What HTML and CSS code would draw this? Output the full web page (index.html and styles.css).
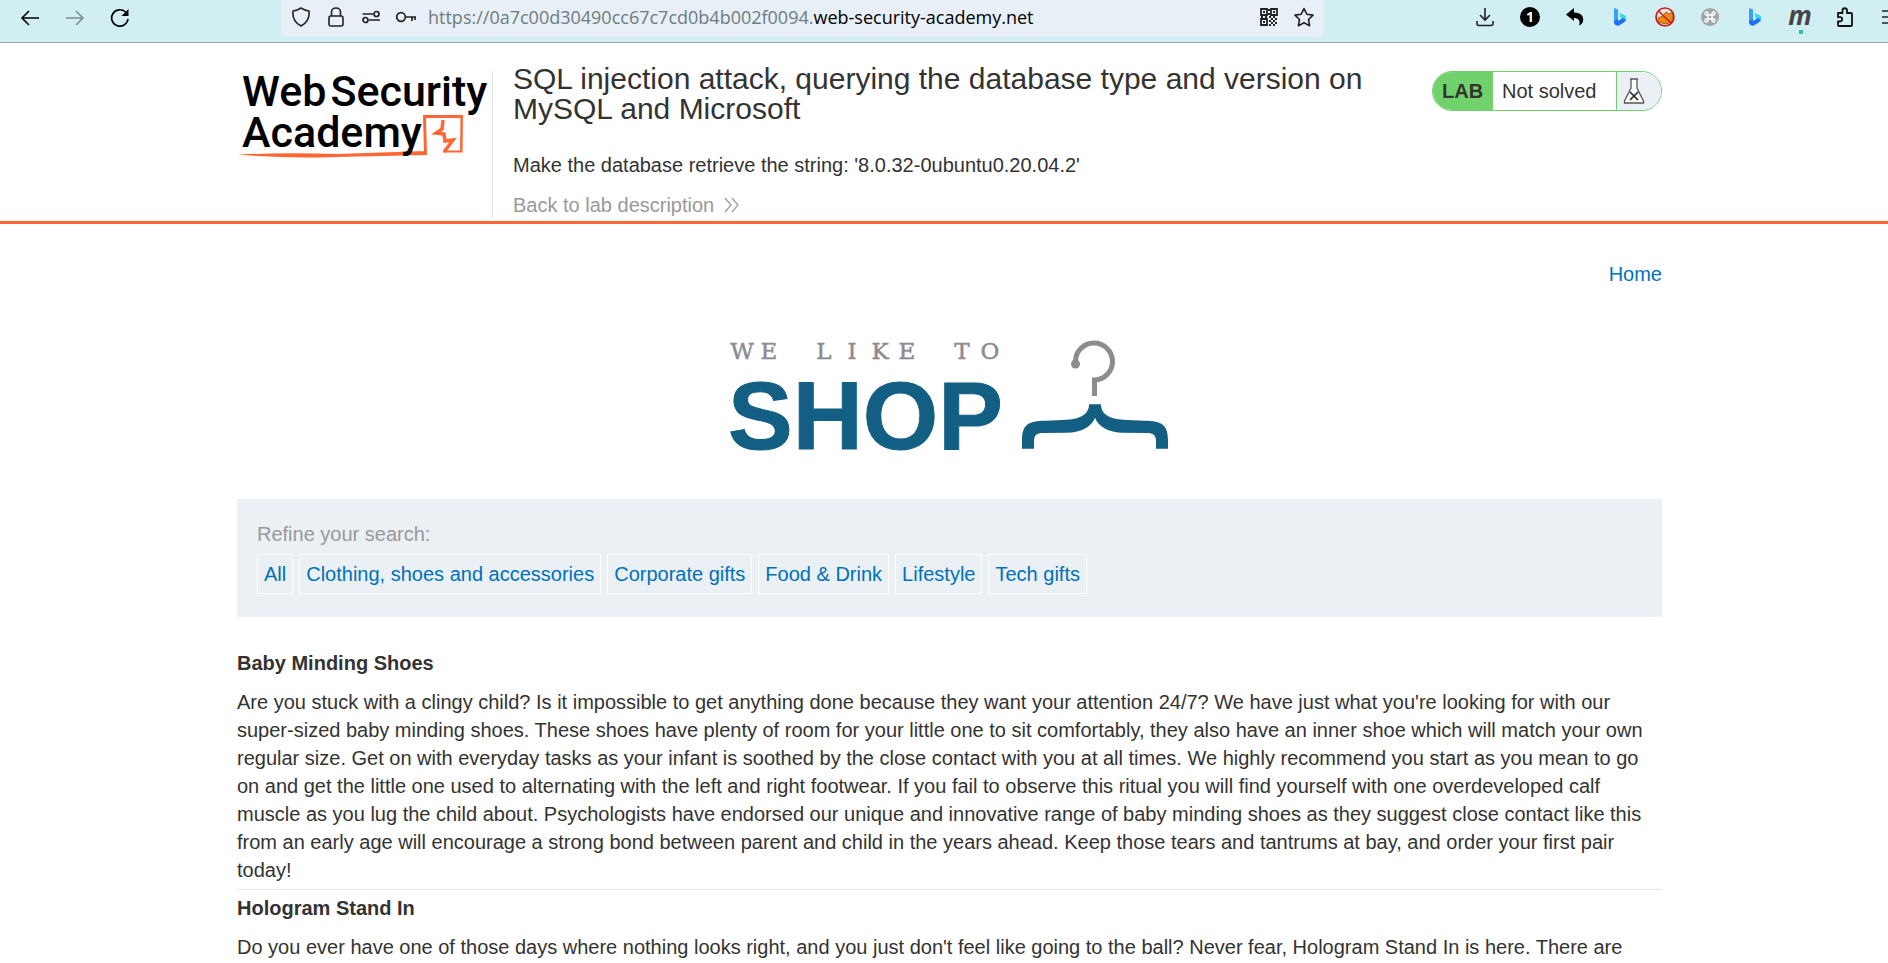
FILE: index.html
```html
<!DOCTYPE html>
<html lang="en">
<head>
<meta charset="utf-8">
<title>SQL injection attack, querying the database type and version on MySQL and Microsoft</title>
<link rel="stylesheet" href="styles.css">
</head>
<body>
<div class="toolbar">
  <div class="nav-buttons">
    <button class="icon-button" aria-label="Back"><svg width="20" height="20" viewBox="0 0 20 20"><path d="M19 10H2M9 3L2 10l7 7" fill="none" stroke="#000" stroke-width="1.6"/></svg></button>
    <button class="icon-button faded" aria-label="Forward"><svg width="20" height="20" viewBox="0 0 20 20"><path d="M1 10h17M11 3l7 7-7 7" fill="none" stroke="#000" stroke-width="1.6"/></svg></button>
    <button class="icon-button" aria-label="Reload"><svg width="20" height="20" viewBox="0 0 20 20"><path d="M15.500 4A8.200 8.200 0 1 0 18 11" fill="none" stroke="#000" stroke-width="1.7"/><path d="M18.500 1v7h-7z"/></svg></button>
  </div>
  <div class="address-bar">
    <div class="address-icons">
      <button class="icon-button" aria-label="Tracking protection"><svg width="20" height="20" viewBox="0 0 20 20"><path d="M10 1Q14 3.500 18 4c.8 7-2 12-8 15-6-3-8.800-8-8-15Q6 3.500 10 1z" fill="none" stroke="#222" stroke-width="1.600" stroke-linejoin="round"/></svg></button>
      <button class="icon-button" aria-label="Connection secure"><svg width="20" height="20" viewBox="0 0 20 20"><rect x="3" y="9" width="14" height="10" rx="2" fill="none" stroke="#222" stroke-width="1.600"/><path d="M5.500 9V5a4.500 4 0 0 1 9 0v4" fill="none" stroke="#222" stroke-width="1.600"/></svg></button>
      <button class="icon-button" aria-label="Permissions"><svg width="20" height="20" viewBox="0 0 20 20"><g fill="none" stroke="#222" stroke-width="1.700"><path d="M1.500 7H12M8 13h11"/><circle cx="15.500" cy="7" r="2.500"/><circle cx="4.500" cy="13" r="2.500"/></g></svg></button>
      <button class="icon-button" aria-label="Saved login"><svg width="22" height="20" viewBox="0 0 22 20"><g fill="none" stroke="#222" stroke-width="1.700"><circle cx="6" cy="10" r="4.300"/><path d="M10.300 10H21M17 10v4M20 10v3"/></g></svg></button>
    </div>
    <div class="url"><span class="url-host">https://0a7c00d30490cc67c7cd0b4b002f0094.</span>web-security-academy.net</div>
    <div class="address-actions">
      <button class="icon-button" aria-label="QR code"><svg width="20" height="20" viewBox="0 0 20 20"><g fill="none" stroke="#222" stroke-width="1.800"><path d="M2 2h6v6H2zM12 2h6v6h-6zM2 12h6v6H2z"/><path d="M4 5h2M14 5h2M4 15h2M9 3h2M9 7h2M2 10h2M6 10h2M10 10h2M14 10h2M12 12h2M16 12h2M10 14h2M14 14h2M12 16h2M16 16h2M10 18h2M14 18h2"/></g></svg></button>
      <button class="icon-button" aria-label="Bookmark"><svg width="22" height="20" viewBox="0 0 22 20"><path d="M11 1.500l2.800 5.700 6.200.9-4.500 4.400 1.100 6.200L11 15.700l-5.600 3 1.100-6.200L2 8.100l6.200-.9z" fill="none" stroke="#222" stroke-width="1.600" stroke-linejoin="round"/></svg></button>
    </div>
  </div>
  <div class="extensions">
    <button class="icon-button" aria-label="Downloads"><svg width="20" height="20" viewBox="0 0 20 20"><path d="M10 1v12M5 8l5 5 5-5M2 14v2.500q0 2 2 2h12q2 0 2-2V14" fill="none" stroke="#222" stroke-width="1.600"/></svg></button>
    <button class="icon-button" aria-label="One item"><span class="counter">1</span></button>
    <button class="icon-button" aria-label="Undo"><svg width="20" height="20" viewBox="0 0 20 20"><path d="M1 7.500L9 1v4.500c7 0 10 4 9 8.500-.5 2-1.500 3.500-4 4.500 2-5-1-7.500-5-7.500V14z"/></svg></button>
    <button class="icon-button" aria-label="Bing"><svg width="20" height="20" viewBox="0 0 20 20"><path d="M4 1l4 1.500V13l-4 3z" fill="#38a0fb"/><path d="M9.500 6l5 2q3 2 1 6l-5-3z" fill="#35d9ee"/><path d="M4 14l4-2v2l5-3 3 2q-1 2-7 5.500-4 1-5-2.500z" fill="#1f6ff5"/></svg></button>
    <button class="icon-button" aria-label="Blocked"><svg width="22" height="20" viewBox="0 0 22 20"><circle cx="11" cy="10" r="9" fill="#efe5dd"/><path d="M4 11l5-2 3-4 3 2 4-2-1 10-6 2-8-2z" fill="#ee8a13" stroke="#95661c"/><circle cx="11" cy="10" r="9" fill="none" stroke="#d01e20" stroke-width="1.700"/><path d="M4.500 4l13 12.500" stroke="#d01e20" stroke-width="1.700"/></svg></button>
    <button class="icon-button" aria-label="Shortcuts"><svg width="20" height="20" viewBox="0 0 20 20"><circle cx="10" cy="10" r="9" fill="#a3a5a5"/><path d="M8 8h4v4H8zM8 8H6.500A1.500 1.500 0 1 1 8 6.500zM12 8V6.500A1.500 1.500 0 1 1 13.500 8zM12 12h1.500a1.500 1.500 0 1 1-1.500 1.500zM8 12v1.500A1.500 1.500 0 1 1 6.500 12z" fill="none" stroke="#fff" stroke-width="1.400"/></svg></button>
    <button class="icon-button" aria-label="Bing chat"><svg width="20" height="20" viewBox="0 0 20 20"><path d="M4 1l4 1.500V13l-4 3z" fill="#38a0fb"/><path d="M9.500 6l5 2q3 2 1 6l-5-3z" fill="#35d9ee"/><path d="M4 14l4-2v2l5-3 3 2q-1 2-7 5.500-4 1-5-2.500z" fill="#1f6ff5"/></svg></button>
    <button class="icon-button letter" aria-label="Mail">m</button>
    <button class="icon-button" aria-label="Extensions"><svg width="20" height="20" viewBox="0 0 20 20"><path d="M3 6h4.500V3.500a2.200 2.200 0 0 1 4.500 0V6h4q1 0 1 1v11q0 1-1 1H4q-1 0-1-1v-3.500h2a2 2 0 0 0 0-4.300H3z" fill="none" stroke="#111" stroke-width="1.800" stroke-linejoin="round"/></svg></button>
    <button class="icon-button" aria-label="Menu"><svg width="20" height="20" viewBox="0 0 20 20"><path d="M2 4h16M2 10h16M2 16h16" stroke="#222" stroke-width="1.600"/></svg></button>
  </div>
</div>

<div class="page">
<header class="lab-header">
  <div class="container lab-inner">
    <div class="logo" role="img" aria-label="Web Security Academy">
      <svg class="logo-mark" width="250" height="90" viewBox="0 0 250 90"><path d="M1 83.500Q48 81.500 100 83L188 80V82.500H187L186 44H226L225.500 81.500H206V79.500H223L223.500 47H189L190 84 100 86Q48 88 1 83.500z" fill="#ff6633"/><path d="M206 49l-1 9-6 4 8 1 1 7 8-1-9 12" fill="none" stroke="#ff6633" stroke-width="3.500"/></svg>
      <div class="logo-text"><span>Web</span><span>Security</span></div>
      <div class="logo-text">Academy</div>
    </div>
    <div class="title-block">
      <h1>SQL injection attack, querying the database type and version on MySQL and Microsoft</h1>
      <p class="hint">Make the database retrieve the string: '8.0.32-0ubuntu0.20.04.2'</p>
      <a class="back-link" href="#">Back to lab description <svg width="16" height="16" viewBox="0 0 16 16"><path d="M1 1l6 7-6 7M8 1l6 7-6 7" fill="none" stroke="#999" stroke-width="1.200"/></svg></a>
    </div>
    <div class="lab-status">
      <span class="lab-tag">LAB</span><span class="lab-state">Not solved</span>
      <span class="lab-flask"><svg width="22" height="28" viewBox="0 0 22 28"><path d="M7 2h8M8 2v9L1.500 24v2h19v-2L14 11V2" fill="#fff" stroke="#555" stroke-width="1.300"/><path d="M7 15l8 8M15 15l-8 8" stroke="#222" stroke-width="1.600"/></svg></span>
    </div>
  </div>
</header>

<main class="container">
  <nav class="top-links"><a href="#">Home</a></nav>
  <div class="shop-banner">
    <svg width="440" height="114" viewBox="0 0 440 114" role="img" aria-label="We like to shop">
      <g class="tagline"><text x="12" y="20">W</text><text x="39" y="20">E</text><text x="94" y="20">L</text><text x="122" y="20">I</text><text x="150" y="20">K</text><text x="177" y="20">E</text><text x="232" y="20">T</text><text x="260" y="20">O</text></g>
      <text class="shop-word" x="-2" y="110">SHOP</text>
      <path d="M345.500 25V22.600A18.500 18.500 0 1 1 364.500 41V57" fill="none" stroke="#8c8c8e" stroke-width="5"/><circle cx="345.500" cy="25" r="4.500" fill="#8c8c8e"/>
      <path transform="translate(-10 -9) scale(.33333)" d="M906 356V330C906 285 925 272 975 272L1030 270C1080 268 1107 255 1107 223H1143C1143 255 1170 268 1220 270L1275 272C1325 272 1344 285 1344 330V356H1308V335C1308 315 1300 309 1280 309L1210 308C1165 307 1135 290 1125 263C1115 290 1085 307 1040 308L970 309C950 309 942 315 942 335V356Z" fill="#125f83"/>
    </svg>
  </div>
  <section class="filters">
    <p>Refine your search:</p>
    <div class="filter-list">
      <a href="#">All</a><a href="#">Clothing, shoes and accessories</a><a href="#">Corporate gifts</a><a href="#">Food &amp; Drink</a><a href="#">Lifestyle</a><a href="#">Tech gifts</a>
    </div>
  </section>
  <section class="products">
    <article>
      <h2>Baby Minding Shoes</h2>
      <p>Are you stuck with a clingy child? Is it impossible to get anything done because they want your attention 24/7? We have just what you're looking for with our super-sized baby minding shoes. These shoes have plenty of room for your little one to sit comfortably, they also have an inner shoe which will match your own regular size. Get on with everyday tasks as your infant is soothed by the close contact with you at all times. We highly recommend you start as you mean to go on and get the little one used to alternating with the left and right footwear. If you fail to observe this ritual you will find yourself with one overdeveloped calf muscle as you lug the child about. Psychologists have endorsed our unique and innovative range of baby minding shoes as they suggest close contact like this from an early age will encourage a strong bond between parent and child in the years ahead. Keep those tears and tantrums at bay, and order your first pair today!</p>
    </article>
    <article>
      <h2>Hologram Stand In</h2>
      <p>Do you ever have one of those days where nothing looks right, and you just don't feel like going to the ball? Never fear, Hologram Stand In is here. There are</p>
    </article>
  </section>
</main>
</div>
</body>
</html>
```
FILE: styles.css
```css
* { box-sizing: border-box; }
body { margin: 0; font: 20px/28px "Liberation Sans", Arial, sans-serif; color: #333332; background: #fff; overflow: hidden; }
h1, h2, p { margin: 0; }
a { color: #0071bb; text-decoration: none; }
.container { max-width: 1425px; margin-left: auto; margin-right: auto; }

/* Browser toolbar */
.toolbar { height: 43px; display: flex; background: #d1eff3; border-bottom: 1px solid #93a7ab; overflow: hidden; }
.icon-button { border: 0; padding: 0; background: none; width: 22px; height: 22px; display: flex; align-items: center; justify-content: center; flex: none; }
.faded { opacity: .4; }
.nav-buttons { display: flex; gap: 23px; width: 281px; flex: none; padding: 7px 0 0 19px; }
.address-bar { flex: 1; height: 37px; display: flex; background: #e8eff6; border-radius: 0 0 5px 5px; padding: 6px 9px 0 9px; }
.address-icons { display: flex; gap: 13px; width: 138px; flex: none; }
.url { flex: 1; font: 18px/22px "Open Sans", "Noto Sans", sans-serif; color: #000; white-space: nowrap; }
.url-host { color: #6c7d80; }
.address-actions { display: flex; gap: 13px; }
.extensions { width: 564px; flex: none; display: flex; gap: 23px; padding: 6px 0 0 150px; }
.counter { background: #000; color: #fff; border-radius: 50%; font: bold 14px/20px "Noto Sans", sans-serif; width: 20px; height: 20px; }
.letter { position: relative; font: italic bold 26px/18px "Open Sans", sans-serif; color: #444; padding-bottom: 4px; }
.letter::after { content: ""; position: absolute; left: 10px; top: 24px; width: 4px; height: 4px; background: #27c2a0; }

/* The page starts slightly right of the window's centre */
.page { padding-left: 11px; }
.lab-header { border-bottom: 3px solid #ff6633; margin-left: -11px; padding-left: 11px; }
.lab-inner { display: flex; padding: 21px 0 2px; }
.logo { position: relative; width: 256px; height: 148px; margin-top: 7px; border-right: 1px solid #e5e5e5; flex: none; }
.logo-mark { position: absolute; left: 0; top: 0; }
.logo-text { position: relative; font: 500 43px/41px Roboto, sans-serif; color: #000; display: flex; gap: 4px; padding-left: 5px; }
.title-block { padding-left: 20px; flex: 0 1 900px; }
.title-block h1 { font-size: 30px; line-height: 30px; font-weight: normal; }
.hint { margin-top: 27px; }
.back-link { display: flex; align-items: center; gap: 10px; margin-top: 12px; color: #999; }
.lab-status { margin: 7px 0 0 auto; height: 40px; display: flex; line-height: 38px; border: 1px solid #70d16d; border-radius: 20px; overflow: hidden; flex: none; }
.lab-tag { width: 60px; padding-left: 9px; background: #70d16d; font-weight: bold; }
.lab-state { width: 124px; padding-left: 9px; border-right: 1px solid #70d16d; }
.lab-flask { width: 44px; padding: 5px 0 0 6px; background: #eaf0f3; line-height: 0; }

/* Shop */
.top-links { padding-top: 36px; text-align: right; }
.shop-banner { padding: 51px 0 46px; display: flex; justify-content: center; }
.shop-banner svg { overflow: visible; }
.tagline { font: 23px "DejaVu Serif", serif; fill: #8c8c8e; stroke: #8c8c8e; stroke-width: .5; text-anchor: middle; }
.shop-word { font: bold 97px "Liberation Sans", Arial, sans-serif; fill: #125f83; stroke: #125f83; stroke-width: 1; }
.filters { background: #eaf0f3; padding: 21px 20px 23px; }
.filters p { color: #999; }
.filter-list { display: flex; flex-wrap: wrap; gap: 6px; margin-top: 6px; }
.filter-list a { border: 1px solid #fff; padding: 5px 6px; }
.products { padding-top: 28px; }
.products article { padding: 4px 0 5px; }
.products article + article { border-top: 1px solid #e5e5e5; }
.products h2 { font-size: 20px; line-height: 28px; }
.products article p { margin-top: 11px; }
```
